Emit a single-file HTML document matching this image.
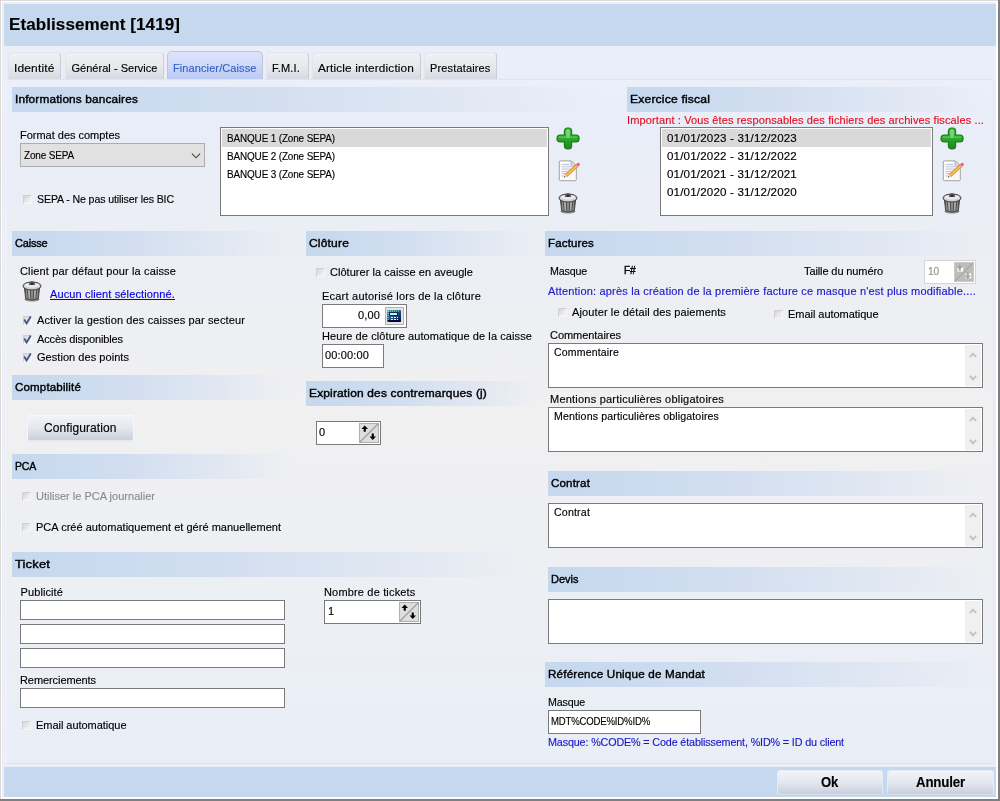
<!DOCTYPE html>
<html lang="fr"><head><meta charset="utf-8"><title>Etablissement [1419]</title>
<style>
html,body{margin:0;padding:0;}
body{width:1000px;height:801px;position:relative;overflow:hidden;background:#fff;font-family:"Liberation Sans", sans-serif;font-size:11px;color:#000;}
#w div,#w span,#w svg{position:absolute;box-sizing:border-box;}
#w span{white-space:pre;-webkit-text-stroke:.15px;}
#w{position:absolute;left:0;top:0;width:1000px;height:801px;overflow:hidden;}

.hd{background:linear-gradient(to right,#c5d8ee 0%,#d1def0 40%,rgba(221,229,242,.75) 75%,rgba(233,238,246,0) 100%);}
.in{background:#fff;border:1px solid #7a7a7a;}
.cb{background:linear-gradient(135deg,#d6d6d9 0%,#e9e9eb 55%,#f6f6f7 100%);border:1px solid #f7f7f8;border-top-color:#d0d0d3;border-left-color:#d0d0d3;}
.btn{border-radius:2px;background:linear-gradient(to bottom,#f2f4f8 0%,#e3e7ee 50%,#c9cfdb 100%);box-shadow:0 0 0 1px rgba(255,255,255,.55), 0 1px 1px rgba(120,130,150,.35);}
.tab{border-radius:4px 4px 0 0;background:linear-gradient(to bottom,#eef0f4 0%,#e8eaee 50%,#d6dae1 100%);border:1px solid #e2e6ec;border-right-color:#c9cdd5;border-bottom:none;}
.row{background:#d9d9d9;}

</style></head><body><div id="w">
<div style="left:0px;top:0px;width:1000px;height:801px;background:#fff;"></div>
<div style="left:0px;top:0px;width:1000px;height:1px;background:#dcd9d5;"></div>
<div style="left:0px;top:0px;width:1px;height:801px;background:#dcd9d5;"></div>
<div style="left:998px;top:0px;width:2px;height:801px;background:#7f7f7f;"></div>
<div style="left:0px;top:799px;width:1000px;height:2px;background:#7f7f7f;"></div>
<div style="left:2px;top:2px;width:994px;height:795px;background:#e9eef8;"></div>
<div style="left:4px;top:4px;width:992px;height:42px;background:#c5d8ee;"></div>
<div style="left:4px;top:767px;width:992px;height:30px;background:#c5d8ee;"></div>
<div style="left:5px;top:79px;width:989px;height:685px;border:1px solid #f2f5fb;border-top-color:#dfe5ef;border-bottom-color:#dde3ed;border-right-color:#e2e7f0;border-radius:3px;background:linear-gradient(to bottom,#ebeff9 0%,#e9edf7 8%,#f0f0f1 48%,#f0f0f1 52%,#e9eef7 100%);"></div>
<div class="tab" style="left:8px;top:52px;width:53px;height:27px;"></div>
<div class="tab" style="left:65px;top:52px;width:99px;height:27px;"></div>
<div style="left:167px;top:51px;width:96px;height:28px;border-radius:5px 5px 0 0;background:linear-gradient(to bottom,#dde4fb 0%,#d0dbf9 45%,#bccbf5 100%);border:1px solid #bfc6d6;border-bottom:none;"></div>
<div class="tab" style="left:266px;top:52px;width:43px;height:27px;"></div>
<div class="tab" style="left:312px;top:52px;width:109px;height:27px;"></div>
<div class="tab" style="left:424px;top:52px;width:73px;height:27px;"></div>
<div class="hd" style="left:12px;top:87px;width:593px;height:25px;"></div>
<div style="left:20px;top:143px;width:185px;height:24px;background:#e1e1e1;border:1px solid #adadad;"><svg width="10" height="6" viewBox="0 0 10 6" style="right:3px;top:9px"><path d="M0.9 0.6 L5 4.8 L9.1 0.6" fill="none" stroke="#404040" stroke-width="1.1"/></svg></div>
<div class="cb" style="left:23px;top:195px;width:9px;height:9px;"></div>
<div class="in" style="left:220px;top:127px;width:329px;height:89px;"></div>
<div style="left:222px;top:129px;width:325px;height:18px;background:#d9d9d9;"></div>
<svg width="24" height="23" viewBox="0 0 24 23" style="left:556px;top:127px"><defs><linearGradient id="gp1" x1="0" y1="0" x2="0" y2="1"><stop offset="0" stop-color="#4cc648"/><stop offset=".45" stop-color="#2eaa2c"/><stop offset="1" stop-color="#1a8a1a"/></linearGradient></defs><path d="M11.4 1 h1.2 a3 3 0 0 1 3 3 v4 h4.4 a3 3 0 0 1 3 3 v1 a3 3 0 0 1 -3 3 h-4.4 v4 a3 3 0 0 1 -3 3 h-1.2 a3 3 0 0 1 -3 -3 v-4 h-4.4 a3 3 0 0 1 -3 -3 v-1 a3 3 0 0 1 3 -3 h4.4 v-4 a3 3 0 0 1 3 -3 z" fill="url(#gp1)" stroke="#1b7a1b" stroke-width="1.2"/><rect x="10.4" y="2.4" width="3.2" height="8.6" rx="1.5" fill="#a6f29a" opacity=".6"/><rect x="2.8" y="9.3" width="18.4" height="2" rx="1" fill="#7fe07a" opacity=".4"/></svg>
<svg width="23" height="22" viewBox="0 0 23 22" style="left:558px;top:160px"><path d="M2.3 0.9 h10.8 l5.2 5.2 v13.6 a1 1 0 0 1 -1 1 h-15 a1 1 0 0 1 -1 -1 v-17.8 a1 1 0 0 1 1 -1 z" fill="#fafafa" stroke="#a3a3a3" stroke-width="1"/><path d="M13.1 0.9 v5.2 h5.2 z" fill="#e2e2e2" stroke="#a3a3a3" stroke-width=".8"/><path d="M3.6 4.5 h8 M3.6 6.8 h9.6 M3.6 9.1 h9.6 M3.6 11.4 h8 M3.6 13.7 h5.6 M3.6 16 h3.4" stroke="#bcc6d2" stroke-width="1"/><path d="M9 16.7 L7 14.5 L18 4.4 L20 6.6 Z" fill="#f2a33a" stroke="#cf7f1e" stroke-width=".6"/><path d="M8 15.6 L19 5.5" stroke="#fbd08a" stroke-width=".9"/><path d="M6.1 17.4 L9 16.7 L7 14.5 Z" fill="#f3dcae"/><path d="M6.1 17.4 L7.5 17.05 L6.55 16 Z" fill="#111"/><path d="M20 6.6 L18 4.4 L19.3 3.2 a1.5 1.5 0 0 1 2.1 .1 a1.5 1.5 0 0 1 -.1 2.1 Z" fill="#e3627f"/></svg>
<svg width="20" height="23" viewBox="0 0 20 23" style="left:558px;top:191px"><defs><linearGradient id="gt2" x1="0" y1="0" x2="1" y2="0"><stop offset="0" stop-color="#555"/><stop offset=".25" stop-color="#b8b8b8"/><stop offset=".5" stop-color="#8f8f8f"/><stop offset=".75" stop-color="#b0b0b0"/><stop offset="1" stop-color="#4c4c4c"/></linearGradient></defs><ellipse cx="10" cy="20.4" rx="7.6" ry="2.1" fill="#3a3a3a" opacity=".5"/><path d="M2.4 8.4 L3.7 19.8 Q10 22.4 16.3 19.8 L17.6 8.4 Z" fill="url(#gt2)" stroke="#333" stroke-width=".9"/><path d="M5.4 11 l.7 9 M8.5 11.4 l.3 9.6 M11.5 11.4 l-.3 9.6 M14.6 11 l-.7 9" stroke="#4a4a4a" stroke-width="1"/><ellipse cx="10" cy="7" rx="9" ry="4" fill="#d2d2d2" stroke="#3a3a3a" stroke-width="1"/><ellipse cx="10" cy="6.2" rx="6.8" ry="2.3" fill="#ededed"/><path d="M7.3 4.6 q2.7 -3.8 5.4 0 v1 h-5.4 z" fill="#5a5a5a" stroke="#2c2c2c" stroke-width=".6"/><ellipse cx="10" cy="4.9" rx="1.3" ry=".8" fill="#1e1e1e"/></svg>
<div class="hd" style="left:627px;top:87px;width:363px;height:25px;"></div>
<div class="in" style="left:660px;top:127px;width:273px;height:89px;"></div>
<div style="left:662px;top:129px;width:269px;height:18px;background:#d9d9d9;"></div>
<svg width="24" height="23" viewBox="0 0 24 23" style="left:940px;top:127px"><defs><linearGradient id="gp3" x1="0" y1="0" x2="0" y2="1"><stop offset="0" stop-color="#4cc648"/><stop offset=".45" stop-color="#2eaa2c"/><stop offset="1" stop-color="#1a8a1a"/></linearGradient></defs><path d="M11.4 1 h1.2 a3 3 0 0 1 3 3 v4 h4.4 a3 3 0 0 1 3 3 v1 a3 3 0 0 1 -3 3 h-4.4 v4 a3 3 0 0 1 -3 3 h-1.2 a3 3 0 0 1 -3 -3 v-4 h-4.4 a3 3 0 0 1 -3 -3 v-1 a3 3 0 0 1 3 -3 h4.4 v-4 a3 3 0 0 1 3 -3 z" fill="url(#gp3)" stroke="#1b7a1b" stroke-width="1.2"/><rect x="10.4" y="2.4" width="3.2" height="8.6" rx="1.5" fill="#a6f29a" opacity=".6"/><rect x="2.8" y="9.3" width="18.4" height="2" rx="1" fill="#7fe07a" opacity=".4"/></svg>
<svg width="23" height="22" viewBox="0 0 23 22" style="left:942px;top:160px"><path d="M2.3 0.9 h10.8 l5.2 5.2 v13.6 a1 1 0 0 1 -1 1 h-15 a1 1 0 0 1 -1 -1 v-17.8 a1 1 0 0 1 1 -1 z" fill="#fafafa" stroke="#a3a3a3" stroke-width="1"/><path d="M13.1 0.9 v5.2 h5.2 z" fill="#e2e2e2" stroke="#a3a3a3" stroke-width=".8"/><path d="M3.6 4.5 h8 M3.6 6.8 h9.6 M3.6 9.1 h9.6 M3.6 11.4 h8 M3.6 13.7 h5.6 M3.6 16 h3.4" stroke="#bcc6d2" stroke-width="1"/><path d="M9 16.7 L7 14.5 L18 4.4 L20 6.6 Z" fill="#f2a33a" stroke="#cf7f1e" stroke-width=".6"/><path d="M8 15.6 L19 5.5" stroke="#fbd08a" stroke-width=".9"/><path d="M6.1 17.4 L9 16.7 L7 14.5 Z" fill="#f3dcae"/><path d="M6.1 17.4 L7.5 17.05 L6.55 16 Z" fill="#111"/><path d="M20 6.6 L18 4.4 L19.3 3.2 a1.5 1.5 0 0 1 2.1 .1 a1.5 1.5 0 0 1 -.1 2.1 Z" fill="#e3627f"/></svg>
<svg width="20" height="23" viewBox="0 0 20 23" style="left:942px;top:191px"><defs><linearGradient id="gt4" x1="0" y1="0" x2="1" y2="0"><stop offset="0" stop-color="#555"/><stop offset=".25" stop-color="#b8b8b8"/><stop offset=".5" stop-color="#8f8f8f"/><stop offset=".75" stop-color="#b0b0b0"/><stop offset="1" stop-color="#4c4c4c"/></linearGradient></defs><ellipse cx="10" cy="20.4" rx="7.6" ry="2.1" fill="#3a3a3a" opacity=".5"/><path d="M2.4 8.4 L3.7 19.8 Q10 22.4 16.3 19.8 L17.6 8.4 Z" fill="url(#gt4)" stroke="#333" stroke-width=".9"/><path d="M5.4 11 l.7 9 M8.5 11.4 l.3 9.6 M11.5 11.4 l-.3 9.6 M14.6 11 l-.7 9" stroke="#4a4a4a" stroke-width="1"/><ellipse cx="10" cy="7" rx="9" ry="4" fill="#d2d2d2" stroke="#3a3a3a" stroke-width="1"/><ellipse cx="10" cy="6.2" rx="6.8" ry="2.3" fill="#ededed"/><path d="M7.3 4.6 q2.7 -3.8 5.4 0 v1 h-5.4 z" fill="#5a5a5a" stroke="#2c2c2c" stroke-width=".6"/><ellipse cx="10" cy="4.9" rx="1.3" ry=".8" fill="#1e1e1e"/></svg>
<div class="hd" style="left:12px;top:231px;width:280px;height:25px;"></div>
<svg width="20" height="23" viewBox="0 0 20 23" style="left:22px;top:279px"><defs><linearGradient id="gt5" x1="0" y1="0" x2="1" y2="0"><stop offset="0" stop-color="#555"/><stop offset=".25" stop-color="#b8b8b8"/><stop offset=".5" stop-color="#8f8f8f"/><stop offset=".75" stop-color="#b0b0b0"/><stop offset="1" stop-color="#4c4c4c"/></linearGradient></defs><ellipse cx="10" cy="20.4" rx="7.6" ry="2.1" fill="#3a3a3a" opacity=".5"/><path d="M2.4 8.4 L3.7 19.8 Q10 22.4 16.3 19.8 L17.6 8.4 Z" fill="url(#gt5)" stroke="#333" stroke-width=".9"/><path d="M5.4 11 l.7 9 M8.5 11.4 l.3 9.6 M11.5 11.4 l-.3 9.6 M14.6 11 l-.7 9" stroke="#4a4a4a" stroke-width="1"/><ellipse cx="10" cy="7" rx="9" ry="4" fill="#d2d2d2" stroke="#3a3a3a" stroke-width="1"/><ellipse cx="10" cy="6.2" rx="6.8" ry="2.3" fill="#ededed"/><path d="M7.3 4.6 q2.7 -3.8 5.4 0 v1 h-5.4 z" fill="#5a5a5a" stroke="#2c2c2c" stroke-width=".6"/><ellipse cx="10" cy="4.9" rx="1.3" ry=".8" fill="#1e1e1e"/></svg>
<div class="cb" style="left:23px;top:316px;width:9px;height:9px;"><svg width="9" height="9" viewBox="0 0 9 9" style="left:-1px;top:-1px"><path d="M1.2 3.6 L3.6 7.4 L7.8 0.6" fill="none" stroke="#46578c" stroke-width="1.9"/></svg></div>
<div class="cb" style="left:23px;top:335px;width:9px;height:9px;"><svg width="9" height="9" viewBox="0 0 9 9" style="left:-1px;top:-1px"><path d="M1.2 3.6 L3.6 7.4 L7.8 0.6" fill="none" stroke="#46578c" stroke-width="1.9"/></svg></div>
<div class="cb" style="left:23px;top:353px;width:9px;height:9px;"><svg width="9" height="9" viewBox="0 0 9 9" style="left:-1px;top:-1px"><path d="M1.2 3.6 L3.6 7.4 L7.8 0.6" fill="none" stroke="#46578c" stroke-width="1.9"/></svg></div>
<div class="hd" style="left:12px;top:375px;width:280px;height:25px;"></div>
<div class="btn" style="left:28px;top:416px;width:105px;height:24px;"></div>
<div class="hd" style="left:12px;top:454px;width:280px;height:25px;"></div>
<div class="cb" style="left:22px;top:492px;width:9px;height:9px;"></div>
<div class="cb" style="left:22px;top:523px;width:9px;height:9px;"></div>
<div class="hd" style="left:12px;top:552px;width:515px;height:25px;"></div>
<div class="in" style="left:20px;top:600px;width:265px;height:20px;"></div>
<div class="in" style="left:20px;top:624px;width:265px;height:20px;"></div>
<div class="in" style="left:20px;top:648px;width:265px;height:20px;"></div>
<div class="in" style="left:20px;top:688px;width:265px;height:20px;"></div>
<div class="cb" style="left:22px;top:721px;width:9px;height:9px;"></div>
<div style="left:324px;top:600px;width:97px;height:24px;background:#fff;border:1px solid #7a7a7a;"><svg width="20" height="20" viewBox="0 0 20 20" preserveAspectRatio="none" style="right:1px;top:1px;"><rect width="20" height="20" fill="#dedede"/><rect x="0.5" y="0.5" width="19" height="19" fill="none" stroke="#b0b0b0"/><path d="M1 19 L19 1" stroke="#9a9a9a" stroke-width="1.1"/><path d="M5.75 2.4 L9 5.9 H6.8 V8.7 H4.7 V5.9 H2.5 Z" fill="#000"/><path d="M13.75 16.9 L10.5 13.4 H12.7 V10.6 H14.8 V13.4 H17 Z" fill="#000"/></svg></div>
<div class="hd" style="left:306px;top:231px;width:232px;height:25px;"></div>
<div class="cb" style="left:316px;top:268px;width:9px;height:9px;"></div>
<div class="in" style="left:322px;top:304px;width:85px;height:24px;"></div>
<div class="in" style="left:322px;top:344px;width:62px;height:24px;"></div>
<div class="hd" style="left:306px;top:381px;width:232px;height:25px;"></div>
<div style="left:316px;top:421px;width:65px;height:24px;background:#fff;border:1px solid #7a7a7a;"><svg width="20" height="20" viewBox="0 0 20 20" preserveAspectRatio="none" style="right:1px;top:1px;"><rect width="20" height="20" fill="#dedede"/><rect x="0.5" y="0.5" width="19" height="19" fill="none" stroke="#b0b0b0"/><path d="M1 19 L19 1" stroke="#9a9a9a" stroke-width="1.1"/><path d="M5.75 2.4 L9 5.9 H6.8 V8.7 H4.7 V5.9 H2.5 Z" fill="#000"/><path d="M13.75 16.9 L10.5 13.4 H12.7 V10.6 H14.8 V13.4 H17 Z" fill="#000"/></svg></div>
<div style="left:385px;top:307px;width:19px;height:18px;background:#e4e4e4;border:1px solid #b2b2b2;"><svg width="14" height="12" viewBox="0 0 14 12" style="left:1px;top:2px"><defs><linearGradient id="gc" x1="0" y1="0" x2="1" y2="1"><stop offset="0" stop-color="#3a9fb0"/><stop offset=".5" stop-color="#1b4f86"/><stop offset="1" stop-color="#080848"/></linearGradient></defs><rect x="0" y="0" width="14" height="12" rx="1.2" fill="url(#gc)"/><rect x="1" y="10" width="13" height="2" rx="1" fill="#06063c"/><path d="M1 1 H12.5 M1 1 V10" fill="none" stroke="#8ff4f4" stroke-width="1" stroke-dasharray="1 1"/><rect x="2.6" y="2.6" width="7.8" height="2.8" fill="#bff2f2" stroke="#050d18" stroke-width=".8"/><path d="M3.5 7 H11 M3.5 9 H11" stroke="#eef6ff" stroke-width="1" stroke-dasharray="1 .6" shape-rendering="crispEdges"/></svg></div>
<div class="hd" style="left:545px;top:231px;width:445px;height:25px;"></div>
<div style="left:924px;top:260px;width:52px;height:24px;background:#fff;border:1px solid #d4d4d4;"><svg width="20" height="20" viewBox="0 0 20 20" preserveAspectRatio="none" style="right:1px;top:1px;"><rect width="20" height="20" fill="#bcbcbc"/><rect x="0.5" y="0.5" width="19" height="19" fill="none" stroke="#c9c9c9"/><path d="M1 19 L19 1" stroke="#a6a6a6" stroke-width="1.1"/><path d="M3.4 4.8 H9.2 V9.4 H3.4 Z M11.4 11.6 H17.2 V16.2 H11.4 Z" fill="#fff"/><path d="M5.75 2.4 L9 5.9 H6.8 V8.7 H4.7 V5.9 H2.5 Z" fill="#a3a3a3"/><path d="M13.75 16.9 L10.5 13.4 H12.7 V10.6 H14.8 V13.4 H17 Z" fill="#a3a3a3"/></svg></div>
<div class="cb" style="left:558px;top:308px;width:9px;height:9px;"></div>
<div class="cb" style="left:774px;top:310px;width:9px;height:9px;"></div>
<div class="in" style="left:548px;top:343px;width:435px;height:45px;"><div style="right:1px;top:1px;bottom:1px;width:16px;background:#f0f0f0;"></div><svg width="8" height="6" viewBox="0 0 8 6" style="right:5px;top:8px"><path d="M0.9 5.2 L4 1.7 L7.1 5.2" fill="none" stroke="#c2c2c2" stroke-width="1.9"/></svg><svg width="8" height="6" viewBox="0 0 8 6" style="right:5px;bottom:6px"><path d="M0.9 0.8 L4 4.3 L7.1 0.8" fill="none" stroke="#c2c2c2" stroke-width="1.9"/></svg></div>
<div class="in" style="left:548px;top:407px;width:435px;height:45px;"><div style="right:1px;top:1px;bottom:1px;width:16px;background:#f0f0f0;"></div><svg width="8" height="6" viewBox="0 0 8 6" style="right:5px;top:8px"><path d="M0.9 5.2 L4 1.7 L7.1 5.2" fill="none" stroke="#c2c2c2" stroke-width="1.9"/></svg><svg width="8" height="6" viewBox="0 0 8 6" style="right:5px;bottom:6px"><path d="M0.9 0.8 L4 4.3 L7.1 0.8" fill="none" stroke="#c2c2c2" stroke-width="1.9"/></svg></div>
<div class="hd" style="left:548px;top:471px;width:437px;height:25px;"></div>
<div class="in" style="left:548px;top:503px;width:435px;height:45px;"><div style="right:1px;top:1px;bottom:1px;width:16px;background:#f0f0f0;"></div><svg width="8" height="6" viewBox="0 0 8 6" style="right:5px;top:8px"><path d="M0.9 5.2 L4 1.7 L7.1 5.2" fill="none" stroke="#c2c2c2" stroke-width="1.9"/></svg><svg width="8" height="6" viewBox="0 0 8 6" style="right:5px;bottom:6px"><path d="M0.9 0.8 L4 4.3 L7.1 0.8" fill="none" stroke="#c2c2c2" stroke-width="1.9"/></svg></div>
<div class="hd" style="left:548px;top:567px;width:437px;height:25px;"></div>
<div class="in" style="left:548px;top:599px;width:435px;height:45px;"><div style="right:1px;top:1px;bottom:1px;width:16px;background:#f0f0f0;"></div><svg width="8" height="6" viewBox="0 0 8 6" style="right:5px;top:8px"><path d="M0.9 5.2 L4 1.7 L7.1 5.2" fill="none" stroke="#c2c2c2" stroke-width="1.9"/></svg><svg width="8" height="6" viewBox="0 0 8 6" style="right:5px;bottom:6px"><path d="M0.9 0.8 L4 4.3 L7.1 0.8" fill="none" stroke="#c2c2c2" stroke-width="1.9"/></svg></div>
<div class="hd" style="left:545px;top:662px;width:445px;height:25px;"></div>
<div class="in" style="left:548px;top:710px;width:153px;height:24px;"></div>
<div class="btn" style="left:778px;top:771px;width:104px;height:23px;"></div>
<div class="btn" style="left:888px;top:771px;width:105px;height:23px;"></div>
<div id="t" style="left:0;top:0;width:1000px;height:801px;will-change:transform;">
<span style="left:9px;top:15px;font-size:17px;line-height:19px;font-weight:bold;letter-spacing:0.093px;">Etablissement [1419]</span>
<span style="left:14px;top:62px;font-size:11px;line-height:12px;letter-spacing:0.135px;transform:scaleX(1.0894);transform-origin:0 0;">Identité</span>
<span style="left:71.5px;top:62px;font-size:11px;line-height:12px;letter-spacing:0.024px;">Général - Service</span>
<span style="left:173px;top:62px;font-size:11px;line-height:12px;color:#3560c8;letter-spacing:0.099px;">Financier/Caisse</span>
<span style="left:272px;top:62px;font-size:11px;line-height:12px;letter-spacing:0.185px;">F.M.I.</span>
<span style="left:318px;top:62px;font-size:11px;line-height:12px;letter-spacing:0.130px;transform:scaleX(1.0734);transform-origin:0 0;">Article interdiction</span>
<span style="left:430px;top:62px;font-size:11px;line-height:12px;letter-spacing:0.150px;">Prestataires</span>
<span style="left:15px;top:93px;font-size:11px;line-height:12px;-webkit-text-stroke:.4px;letter-spacing:0.152px;transform:scaleX(1.0731);transform-origin:0 0;">Informations bancaires</span>
<span style="left:20px;top:129px;font-size:11px;line-height:12px;letter-spacing:-0.015px;">Format des comptes</span>
<span style="left:24px;top:149px;font-size:11px;line-height:12px;letter-spacing:-0.157px;transform:scaleX(0.9049);transform-origin:0 0;">Zone SEPA</span>
<span style="left:37px;top:193px;font-size:11px;line-height:12px;letter-spacing:-0.122px;transform:scaleX(0.9630);transform-origin:0 0;">SEPA - Ne pas utiliser les BIC</span>
<span style="left:227px;top:132px;font-size:11px;line-height:12px;letter-spacing:-0.153px;transform:scaleX(0.9030);transform-origin:0 0;">BANQUE 1 (Zone SEPA)</span>
<span style="left:227px;top:150px;font-size:11px;line-height:12px;letter-spacing:-0.153px;transform:scaleX(0.9030);transform-origin:0 0;">BANQUE 2 (Zone SEPA)</span>
<span style="left:227px;top:168px;font-size:11px;line-height:12px;letter-spacing:-0.153px;transform:scaleX(0.9030);transform-origin:0 0;">BANQUE 3 (Zone SEPA)</span>
<span style="left:630px;top:93px;font-size:11px;line-height:12px;-webkit-text-stroke:.4px;letter-spacing:0.141px;transform:scaleX(1.1049);transform-origin:0 0;">Exercice fiscal</span>
<span style="left:627px;top:114px;font-size:11px;line-height:12px;color:#e2101f;letter-spacing:0.125px;">Important : Vous êtes responsables des fichiers des archives fiscales ...</span>
<span style="left:667px;top:132px;font-size:11px;line-height:12px;letter-spacing:0.156px;transform:scaleX(1.0527);transform-origin:0 0;">01/01/2023 - 31/12/2023</span>
<span style="left:667px;top:150px;font-size:11px;line-height:12px;letter-spacing:0.156px;transform:scaleX(1.0527);transform-origin:0 0;">01/01/2022 - 31/12/2022</span>
<span style="left:667px;top:168px;font-size:11px;line-height:12px;letter-spacing:0.156px;transform:scaleX(1.0527);transform-origin:0 0;">01/01/2021 - 31/12/2021</span>
<span style="left:667px;top:186px;font-size:11px;line-height:12px;letter-spacing:0.156px;transform:scaleX(1.0527);transform-origin:0 0;">01/01/2020 - 31/12/2020</span>
<span style="left:15px;top:237px;font-size:11px;line-height:12px;-webkit-text-stroke:.4px;letter-spacing:-0.188px;">Caisse</span>
<span style="left:20px;top:265px;font-size:11px;line-height:12px;letter-spacing:0.136px;">Client par défaut pour la caisse</span>
<span style="left:50px;top:288px;font-size:11px;line-height:12px;color:#0000e0;letter-spacing:0.133px;text-decoration:underline;">Aucun client sélectionné.</span>
<span style="left:37px;top:314px;font-size:11px;line-height:12px;letter-spacing:0.134px;">Activer la gestion des caisses par secteur</span>
<span style="left:37px;top:332.5px;font-size:11px;line-height:12px;letter-spacing:-0.121px;">Accès disponibles</span>
<span style="left:37px;top:350.5px;font-size:11px;line-height:12px;letter-spacing:0.049px;">Gestion des points</span>
<span style="left:15px;top:381px;font-size:11px;line-height:12px;-webkit-text-stroke:.4px;letter-spacing:0.153px;transform:scaleX(1.0480);transform-origin:0 0;">Comptabilité</span>
<span style="left:44px;top:421px;font-size:12px;line-height:14px;letter-spacing:0.085px;">Configuration</span>
<span style="left:15px;top:460px;font-size:11px;line-height:12px;-webkit-text-stroke:.4px;letter-spacing:-0.189px;transform:scaleX(0.9520);transform-origin:0 0;">PCA</span>
<span style="left:36px;top:490px;font-size:11px;line-height:12px;color:#8c8c8c;letter-spacing:0.015px;">Utiliser le PCA journalier</span>
<span style="left:36px;top:521px;font-size:11px;line-height:12px;letter-spacing:0.023px;">PCA créé automatiquement et géré manuellement</span>
<span style="left:15px;top:558px;font-size:11px;line-height:12px;-webkit-text-stroke:.4px;letter-spacing:0.145px;transform:scaleX(1.1743);transform-origin:0 0;">Ticket</span>
<span style="left:20.5px;top:586px;font-size:11px;line-height:12px;letter-spacing:0.102px;">Publicité</span>
<span style="left:20px;top:674px;font-size:11px;line-height:12px;letter-spacing:-0.079px;">Remerciements</span>
<span style="left:36px;top:719px;font-size:11px;line-height:12px;letter-spacing:-0.036px;">Email automatique</span>
<span style="left:324px;top:586px;font-size:11px;line-height:12px;letter-spacing:0.167px;">Nombre de tickets</span>
<span style="left:328px;top:605px;font-size:11px;line-height:12px;">1</span>
<span style="left:309px;top:237px;font-size:11px;line-height:12px;-webkit-text-stroke:.4px;letter-spacing:0.152px;transform:scaleX(1.0949);transform-origin:0 0;">Clôture</span>
<span style="left:330px;top:266px;font-size:11px;line-height:12px;letter-spacing:0.039px;">Clôturer la caisse en aveugle</span>
<span style="left:322px;top:290px;font-size:11px;line-height:12px;letter-spacing:0.223px;">Ecart autorisé lors de la clôture</span>
<span style="left:358px;top:309px;font-size:11px;line-height:12px;letter-spacing:0.145px;">0,00</span>
<span style="left:322px;top:330px;font-size:11px;line-height:12px;letter-spacing:0.096px;">Heure de clôture automatique de la caisse</span>
<span style="left:325px;top:349px;font-size:11px;line-height:12px;letter-spacing:0.146px;">00:00:00</span>
<span style="left:309px;top:387px;font-size:11px;line-height:12px;-webkit-text-stroke:.4px;letter-spacing:0.149px;transform:scaleX(1.0871);transform-origin:0 0;">Expiration des contremarques (j)</span>
<span style="left:319px;top:426px;font-size:11px;line-height:12px;">0</span>
<span style="left:548px;top:237px;font-size:11px;line-height:12px;-webkit-text-stroke:.4px;letter-spacing:0.160px;transform:scaleX(1.0435);transform-origin:0 0;">Factures</span>
<span style="left:549.5px;top:265px;font-size:11px;line-height:12px;letter-spacing:-0.163px;transform:scaleX(0.9695);transform-origin:0 0;">Masque</span>
<span style="left:623.5px;top:264px;font-size:11px;line-height:12px;-webkit-text-stroke:.4px;letter-spacing:-0.161px;transform:scaleX(0.9183);transform-origin:0 0;">F#</span>
<span style="left:804px;top:265px;font-size:11px;line-height:12px;letter-spacing:-0.107px;">Taille du numéro</span>
<span style="left:928px;top:265px;font-size:11px;line-height:12px;color:#8f8f8f;letter-spacing:-0.153px;transform:scaleX(0.9210);transform-origin:0 0;">10</span>
<span style="left:548px;top:285px;font-size:11px;line-height:12px;color:#1a18c8;letter-spacing:0.179px;">Attention: après la création de la première facture ce masque n&#x27;est plus modifiable....</span>
<span style="left:572px;top:306px;font-size:11px;line-height:12px;letter-spacing:0.115px;">Ajouter le détail des paiements</span>
<span style="left:788px;top:308px;font-size:11px;line-height:12px;letter-spacing:-0.036px;">Email automatique</span>
<span style="left:550px;top:329px;font-size:11px;line-height:12px;letter-spacing:-0.044px;">Commentaires</span>
<span style="left:554px;top:347px;font-size:10px;line-height:11px;letter-spacing:0.164px;transform:scaleX(1.0512);transform-origin:0 0;">Commentaire</span>
<span style="left:550px;top:393px;font-size:11px;line-height:12px;letter-spacing:0.220px;">Mentions particulières obligatoires</span>
<span style="left:554px;top:411px;font-size:10px;line-height:11px;letter-spacing:0.130px;transform:scaleX(1.0596);transform-origin:0 0;">Mentions particulières obligatoires</span>
<span style="left:551px;top:477px;font-size:11px;line-height:12px;-webkit-text-stroke:.4px;letter-spacing:0.155px;transform:scaleX(1.0495);transform-origin:0 0;">Contrat</span>
<span style="left:554px;top:507px;font-size:10px;line-height:11px;letter-spacing:0.141px;transform:scaleX(1.0657);transform-origin:0 0;">Contrat</span>
<span style="left:551px;top:573px;font-size:11px;line-height:12px;-webkit-text-stroke:.4px;letter-spacing:-0.003px;">Devis</span>
<span style="left:548px;top:668px;font-size:11px;line-height:12px;-webkit-text-stroke:.4px;letter-spacing:0.166px;transform:scaleX(1.0606);transform-origin:0 0;">Référence Unique de Mandat</span>
<span style="left:547.5px;top:696px;font-size:11px;line-height:12px;letter-spacing:-0.163px;transform:scaleX(0.9695);transform-origin:0 0;">Masque</span>
<span style="left:551px;top:715px;font-size:11px;line-height:12px;letter-spacing:-0.195px;transform:scaleX(0.8698);transform-origin:0 0;">MDT%CODE%ID%ID%</span>
<span style="left:548px;top:736px;font-size:11px;line-height:12px;color:#1a18c8;letter-spacing:-0.139px;transform:scaleX(0.9774);transform-origin:0 0;">Masque: %CODE% = Code établissement, %ID% = ID du client</span>
<span style="left:821px;top:774px;font-size:14px;line-height:16px;font-weight:bold;letter-spacing:-0.234px;transform:scaleX(0.9330);transform-origin:0 0;">Ok</span>
<span style="left:916px;top:774px;font-size:14px;line-height:16px;font-weight:bold;letter-spacing:-0.189px;transform:scaleX(0.9502);transform-origin:0 0;">Annuler</span>
</div>
</div></body></html>
